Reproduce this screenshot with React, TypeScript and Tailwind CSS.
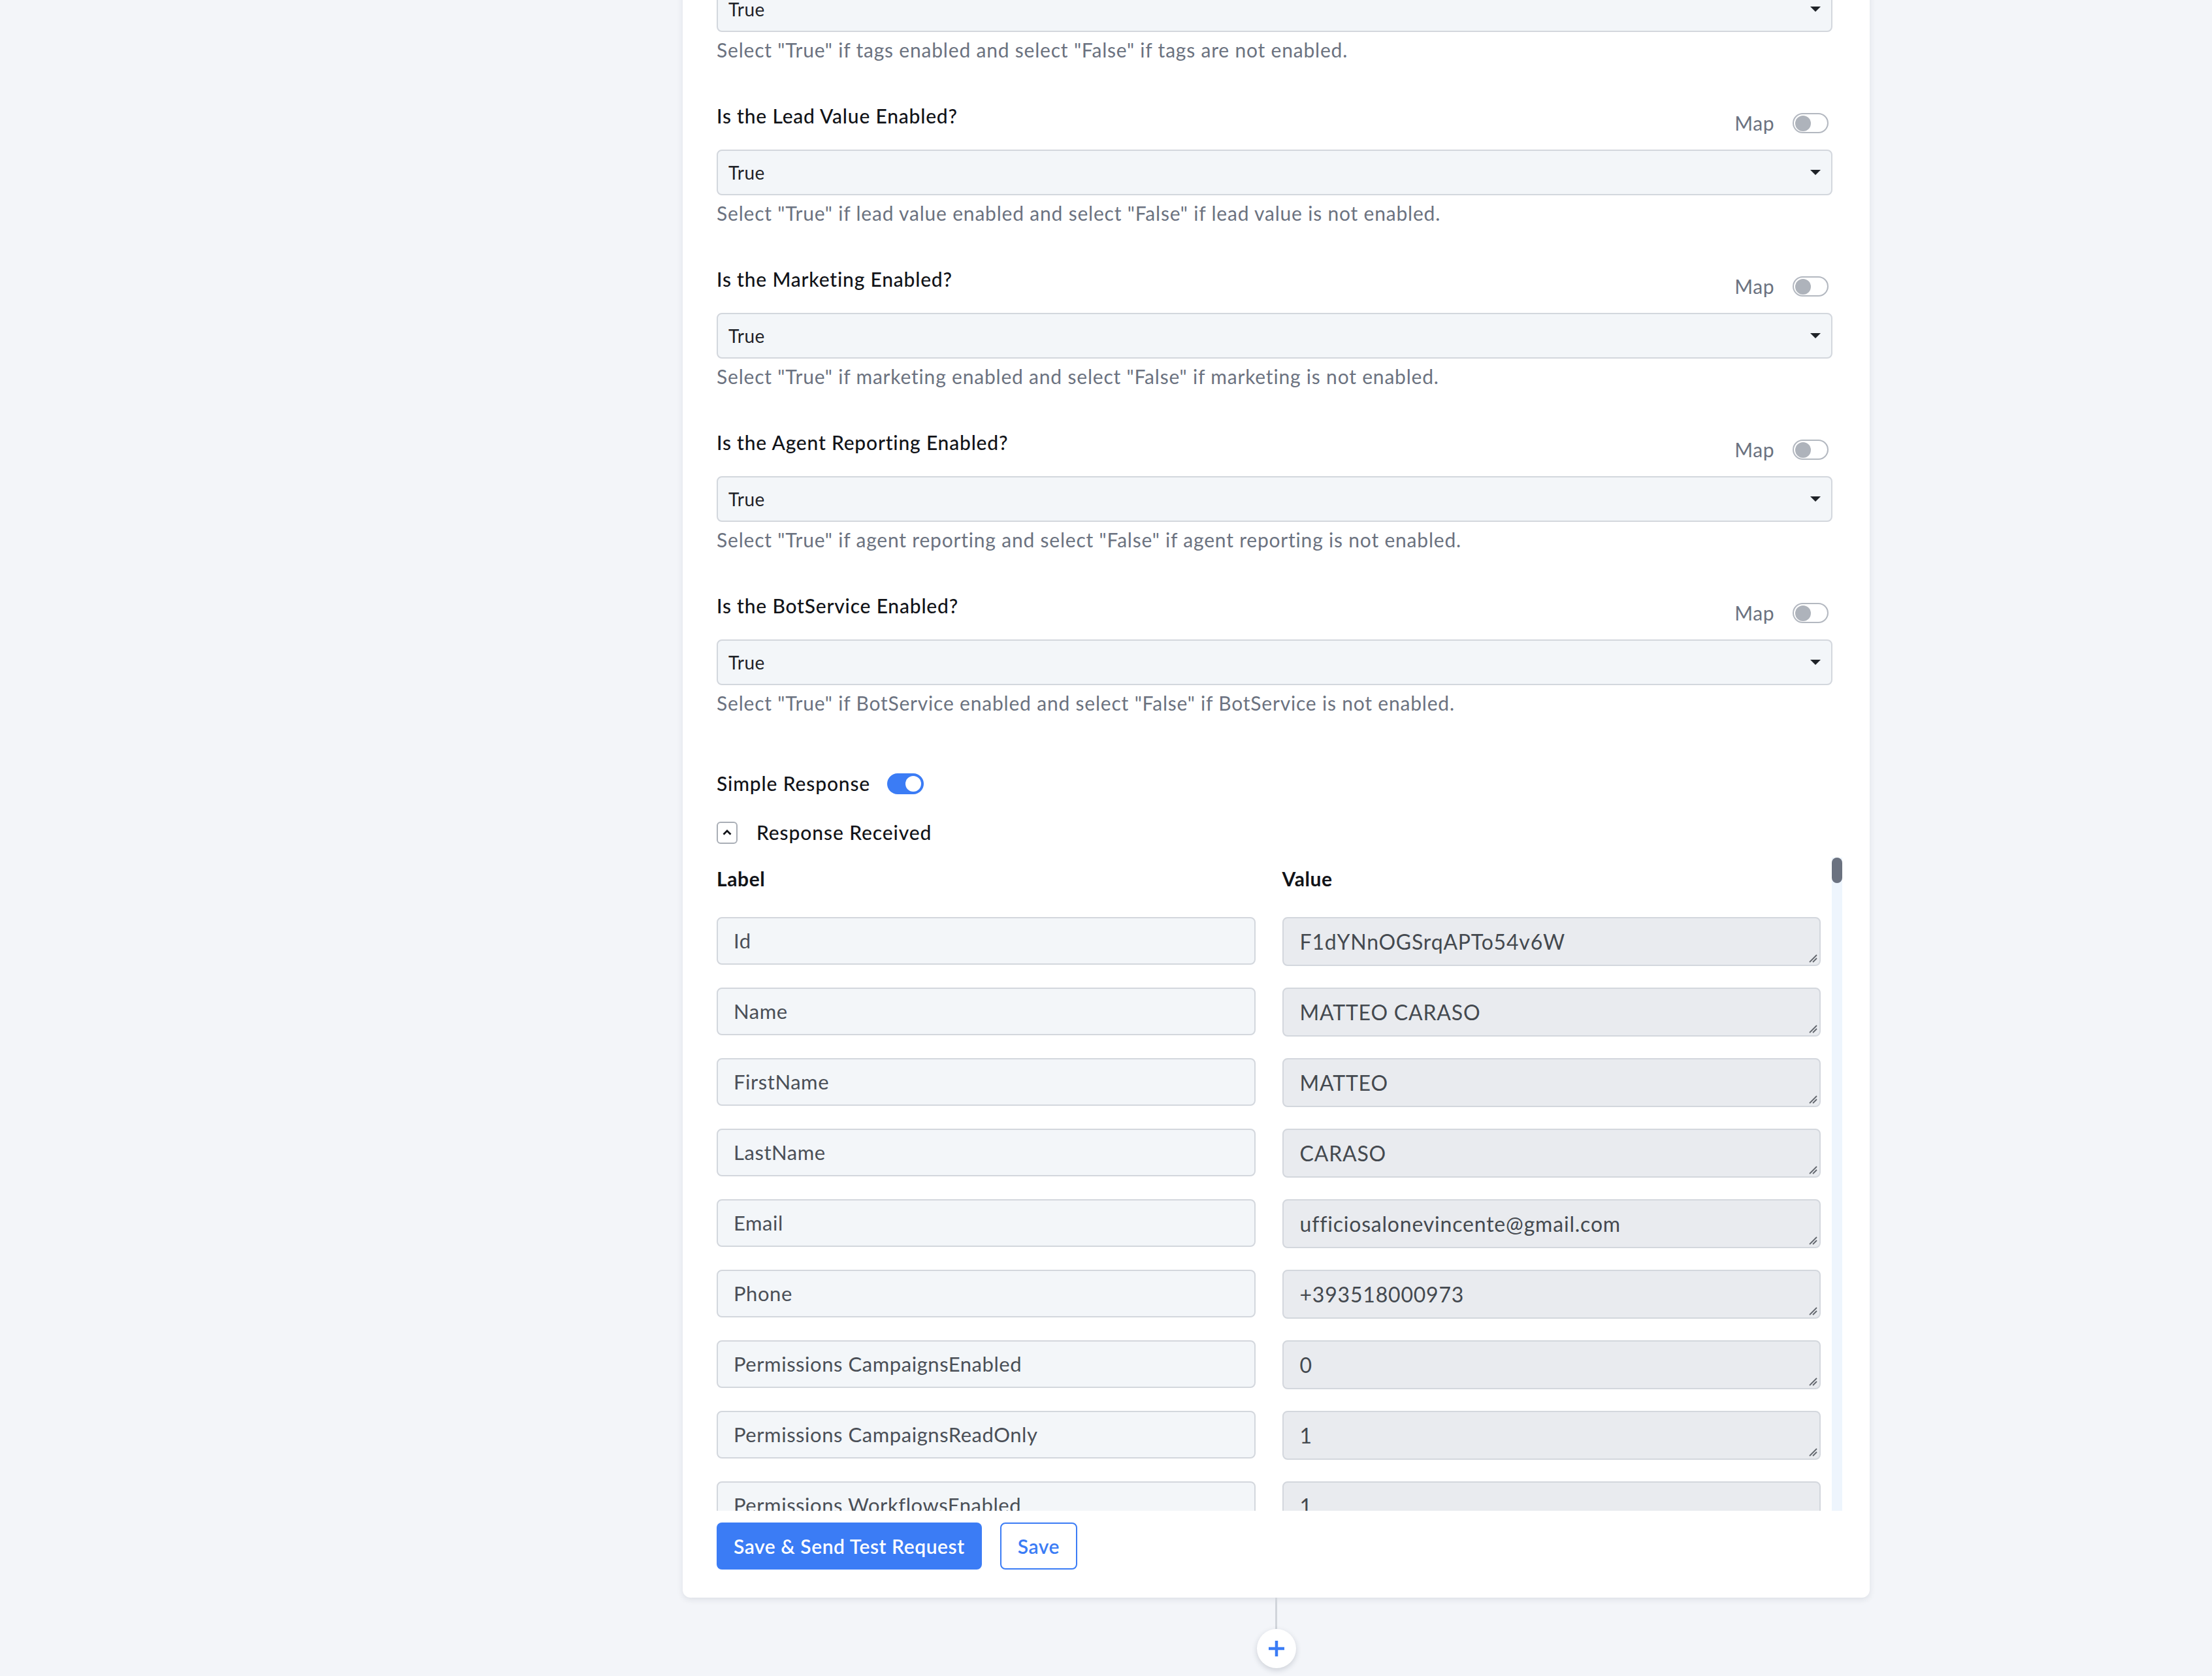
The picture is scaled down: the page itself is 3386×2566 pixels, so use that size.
import React from 'react';

const fields = [
  {
    label: 'Is the Tags Enabled?',
    help: 'Select "True" if tags enabled and select "False" if tags are not enabled.',
  },
  {
    label: 'Is the Lead Value Enabled?',
    help: 'Select "True" if lead value enabled and select "False" if lead value is not enabled.',
  },
  {
    label: 'Is the Marketing Enabled?',
    help: 'Select "True" if marketing enabled and select "False" if marketing is not enabled.',
  },
  {
    label: 'Is the Agent Reporting Enabled?',
    help: 'Select "True" if agent reporting and select "False" if agent reporting is not enabled.',
  },
  {
    label: 'Is the BotService Enabled?',
    help: 'Select "True" if BotService enabled and select "False" if BotService is not enabled.',
  },
];

const responseRows = [
  ['Id', 'F1dYNnOGSrqAPTo54v6W'],
  ['Name', 'MATTEO CARASO'],
  ['FirstName', 'MATTEO'],
  ['LastName', 'CARASO'],
  ['Email', 'ufficiosalonevincente@gmail.com'],
  ['Phone', '+393518000973'],
  ['Permissions CampaignsEnabled', '0'],
  ['Permissions CampaignsReadOnly', '1'],
  ['Permissions WorkflowsEnabled', '1'],
  ['Permissions WorkflowsReadOnly', '1'],
  ['Permissions ContactsEnabled', '1'],
];

const MapToggle: React.FC = () => (
  <div className="flex items-center gap-[28px] mt-[11px] mr-[6px]">
    <span className="text-[30px] leading-[45px] tracking-[0.5px] text-[#6b7280]">Map</span>
    <div className="w-[55px] h-[31px] rounded-full border-2 border-[#b3b8c0] bg-white flex items-center px-[2px]">
      <div className="w-[24px] h-[24px] rounded-full bg-[#aeb3bb]" />
    </div>
  </div>
);

const SelectBox: React.FC<{ value: string }> = ({ value }) => (
  <div className="mt-[18px] h-[70px] rounded-[8px] border-2 border-[#d3d7dd] bg-[#f3f6f9] px-[16px] flex items-center justify-between">
    <span className="text-[28px] tracking-[0.4px] text-[#1f2328]">{value}</span>
    <svg width="16" height="8" viewBox="0 0 16 8">
      <path d="M0 0 L16 0 L8 8 Z" fill="#1f2328" />
    </svg>
  </div>
);

const Field: React.FC<{ label: string; help: string }> = ({ label, help }) => (
  <div>
    <div className="flex items-start justify-between">
      <span className="text-[30px] leading-[45px] tracking-[0.8px] font-medium text-[#111318]">{label}</span>
      <MapToggle />
    </div>
    <SelectBox value="True" />
    <p className="mt-[5px] text-[30px] leading-[45px] tracking-[0.8px] text-[#6b7280]">{help}</p>
  </div>
);

const ResizeGrip: React.FC = () => (
  <svg
    className="absolute right-[3px] bottom-[3px]"
    width="14"
    height="14"
    viewBox="0 0 14 14"
  >
    <path d="M13 2 L2 13 M13 7 L7 13" stroke="#63676e" strokeWidth="1.8" />
  </svg>
);

export default function App() {
  return (
    <div
      className="h-[2566px] overflow-hidden bg-[#f3f5f9] pl-[1045px]"
      style={{ fontFamily: 'Lato, "Noto Sans", sans-serif' }}
    >
      <div className="w-[1817px] flex flex-col items-center">
        {/* step card */}
        <div className="w-full -mt-[135px] pt-[40px] pb-[43px] pl-[52px] pr-[42px] bg-white rounded-[12px] shadow-[0_3px_10px_rgba(30,41,59,0.10)]">
          <div className="pr-[15px] flex flex-col gap-[56px]">
            {fields.map((f) => (
              <Field key={f.label} label={f.label} help={f.help} />
            ))}
          </div>

          <div className="mt-[78px] flex items-center gap-[26px]">
            <span className="text-[30px] leading-[45px] tracking-[0.85px] font-medium text-[#111318]">Simple Response</span>
            <div className="w-[56px] h-[32px] rounded-full bg-[#3b7cf5] flex items-center justify-end px-[4px]">
              <div className="w-[24px] h-[24px] rounded-full bg-white" />
            </div>
          </div>

          <div className="mt-[30px] flex items-center gap-[29px]">
            <div className="w-[32px] h-[34px] rounded-[6px] border-2 border-[#a9aeb6] flex items-center justify-center">
              <svg width="16" height="11" viewBox="0 0 16 11">
                <path d="M2.5 8.5 L8 3 L13.5 8.5" stroke="#111318" strokeWidth="2.8" fill="none" />
              </svg>
            </div>
            <span className="text-[30px] leading-[45px] tracking-[0.9px] font-medium text-[#111318]">Response Received</span>
          </div>

          {/* response table with its own scrollbar */}
          <div className="mt-[16px] h-[1000px] flex gap-[17px]">
            <div className="flex-1 overflow-hidden pt-[10px]">
              <div className="grid grid-cols-2 gap-x-[41px]">
                <span className="text-[30px] leading-[45px] tracking-[0.6px] font-bold text-[#111318]">Label</span>
                <span className="text-[30px] leading-[45px] tracking-[0.6px] font-bold text-[#111318]">Value</span>
              </div>
              <div className="mt-[36px] flex flex-col gap-[33px]">
                {responseRows.map(([k, v]) => (
                  <div key={k} className="grid grid-cols-2 gap-x-[41px] items-start">
                    <div className="h-[73px] rounded-[8px] border-2 border-[#d3d7dd] bg-[#f3f6f9] px-[24px] flex items-center">
                      <span className="text-[31px] tracking-[0.55px] text-[#4a4f57]">{k}</span>
                    </div>
                    <div className="relative h-[75px] rounded-[8px] border-2 border-[#d3d7dd] bg-[#e9ebef] px-[25px] flex items-center">
                      <span className="text-[32px] tracking-[0.8px] text-[#44494f]">{v}</span>
                      <ResizeGrip />
                    </div>
                  </div>
                ))}
              </div>
            </div>
            <div className="w-[16px] bg-[#eef5fd]">
              <div className="h-[39px] rounded-full bg-[#6b7280]" />
            </div>
          </div>

          <div className="mt-[18px] flex items-center gap-[28px]">
            <button className="h-[72px] px-[26px] rounded-[8px] bg-[#3b7cf5] text-white text-[30px] tracking-[0.55px] font-semibold">
              Save &amp; Send Test Request
            </button>
            <button className="h-[72px] px-[25px] rounded-[8px] border-2 border-[#3b7cf5] bg-white text-[#3b7cf5] text-[30px] tracking-[0.55px] font-semibold">
              Save
            </button>
          </div>
        </div>

        {/* connector to next step */}
        <div className="w-[3px] h-[48px] bg-[#d1d5db]" />
        <div className="w-[60px] h-[60px] rounded-full bg-white shadow-[0_3px_8px_rgba(30,41,59,0.18)] flex items-center justify-center">
          <svg width="26" height="26" viewBox="0 0 26 26">
            <path d="M13 1 V25 M1 13 H25" stroke="#3b7cf5" strokeWidth="4.5" />
          </svg>
        </div>
      </div>
    </div>
  );
}
